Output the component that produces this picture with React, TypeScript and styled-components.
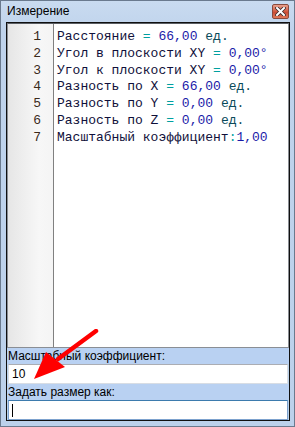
import React from 'react';
import styled, { createGlobalStyle } from 'styled-components';

const GlobalStyle = createGlobalStyle`
  html, body { margin: 0; padding: 0; background: #fff; }
  #root { width: 295px; height: 427px; }
`;

type Tok = { t: string; k?: 'op' | 'num' | 'unit' };

const lines: Tok[][] = [
  [{ t: 'Расстояние ' }, { t: '=', k: 'op' }, { t: ' ' }, { t: '66,00', k: 'num' }, { t: ' ' }, { t: 'ед.', k: 'unit' }],
  [{ t: 'Угол в плоскости XY ' }, { t: '=', k: 'op' }, { t: ' ' }, { t: '0,00°', k: 'num' }],
  [{ t: 'Угол к плоскости XY ' }, { t: '=', k: 'op' }, { t: ' ' }, { t: '0,00°', k: 'num' }],
  [{ t: 'Разность по X ' }, { t: '=', k: 'op' }, { t: ' ' }, { t: '66,00', k: 'num' }, { t: ' ' }, { t: 'ед.', k: 'unit' }],
  [{ t: 'Разность по Y ' }, { t: '=', k: 'op' }, { t: ' ' }, { t: '0,00', k: 'num' }, { t: ' ' }, { t: 'ед.', k: 'unit' }],
  [{ t: 'Разность по Z ' }, { t: '=', k: 'op' }, { t: ' ' }, { t: '0,00', k: 'num' }, { t: ' ' }, { t: 'ед.', k: 'unit' }],
  [{ t: 'Масштабный коэффициент' }, { t: ':', k: 'op' }, { t: '1,00', k: 'num' }],
];

const App: React.FC = () => {
  return (
    <>
      <GlobalStyle />
      <Window>
        <TitleBar>
          <Title>Измерение</Title>
          <CloseButton>
            <svg width="11" height="9" viewBox="0 0 11 9">
              <path d="M2 1 L9 8 M9 1 L2 8" stroke="#3a2a2a" strokeWidth="3.6" strokeLinecap="square" />
              <path d="M2 1 L9 8 M9 1 L2 8" stroke="#fff" strokeWidth="2" strokeLinecap="square" />
            </svg>
          </CloseButton>
        </TitleBar>
        <Client>
          <Editor>
            <Gutter>
              {lines.map((_, i) => (
                <LineNo key={i}>{i + 1}</LineNo>
              ))}
            </Gutter>
            <Code>
              {lines.map((l, i) => (
                <CodeLine key={i}>
                  {l.map((tok, j) => (
                    <Tok key={j} $kind={tok.k}>{tok.t}</Tok>
                  ))}
                </CodeLine>
              ))}
            </Code>
          </Editor>
          <FieldLabel>Масштабный коэффициент:</FieldLabel>
          <TextBox>10</TextBox>
          <FieldLabel>Задать размер как:</FieldLabel>
          <TextBox $focused>
            <Caret />
          </TextBox>
          <Arrow width="70" height="56" viewBox="0 0 70 56">
            <path d="M64 2 L26 30" stroke="#f00" strokeWidth="4.5" strokeLinecap="round" />
            <polygon points="2,50 14,23 33,38" fill="#f00" />
          </Arrow>
        </Client>
      </Window>
    </>
  );
};

export default App;

const Window = styled.div`
  position: relative;
  box-sizing: border-box;
  width: 295px;
  height: 427px;
  display: flex;
  flex-direction: column;
  background: linear-gradient(#c9dbf0, #bfd3ec 30px, #bcd1eb);
  border: 1px solid #6a7a8e;
  font-family: "Liberation Sans", Arial, sans-serif;
`;

const TitleBar = styled.div`
  height: 21px;
  display: flex;
  align-items: flex-start;
  justify-content: space-between;
  padding: 0 5px 0 6px;
`;

const Title = styled.div`
  font-size: 12px;
  line-height: 15px;
  padding-top: 3px;
  color: #000;
`;

const CloseButton = styled.div`
  box-sizing: border-box;
  width: 17px;
  height: 15px;
  margin-top: 3px;
  border: 1px solid #8a4a3c;
  border-radius: 2px;
  background: linear-gradient(#e8a08c, #d25a40 50%, #c84630 51%, #e07a5a);
  display: flex;
  align-items: center;
  justify-content: center;
`;

const Client = styled.div`
  position: relative;
  flex: 1;
  margin: 0 4px 5px 5px;
  border: 1px solid #101010;
  background: #b9d1ea;
  display: flex;
  flex-direction: column;
`;

const Editor = styled.div`
  box-sizing: border-box;
  height: 325px;
  display: flex;
  background: #fff;
  border: 1px solid #8a8e94;
  border-top-color: #5a5e64;
`;

const Gutter = styled.div`
  width: 45px;
  padding-top: 5px;
  background: linear-gradient(90deg, #e6e6e6, #f7f7f7 70%, #f4f4f4);
  border-right: 1px solid #808080;
`;

const LineNo = styled.div`
  font-family: "Liberation Mono", "Courier New", monospace;
  font-size: 13px;
  line-height: 16.8px;
  height: 16.8px;
  text-align: right;
  padding-right: 12px;
  color: #3a2a1a;
`;

const Code = styled.div`
  flex: 1;
  padding: 5px 0 0 3px;
  overflow: hidden;
`;

const CodeLine = styled.div`
  font-family: "Liberation Mono", "Courier New", monospace;
  font-size: 13px;
  line-height: 16.8px;
  height: 16.8px;
  white-space: pre;
  color: #10103a;
`;

const Tok = styled.span<{ $kind?: 'op' | 'num' | 'unit' }>`
  color: ${(p) =>
    p.$kind === 'op' ? '#00a0a0' : p.$kind === 'num' ? '#1a1aa8' : p.$kind === 'unit' ? '#0a4a5a' : 'inherit'};
`;

const FieldLabel = styled.div`
  height: 16px;
  padding-left: 1px;
  font-size: 12px;
  line-height: 17px;
  color: #000;
  background: #b9d1f2;
`;

const TextBox = styled.div<{ $focused?: boolean }>`
  box-sizing: border-box;
  height: 20px;
  margin: 0 1px 0 1px;
  padding: 0 3px;
  display: flex;
  align-items: center;
  background: #fff;
  font-size: 12px;
  color: #000;
  border: 1px solid ${(p) => (p.$focused ? '#7da2ce' : '#d8dde4')};
  border-top-color: ${(p) => (p.$focused ? '#3d7bad' : '#abadb3')};
`;

const Caret = styled.span`
  display: block;
  width: 1px;
  height: 13px;
  background: #000;
`;

const Arrow = styled.svg`
  position: absolute;
  left: 25px;
  top: 306px;
`;
